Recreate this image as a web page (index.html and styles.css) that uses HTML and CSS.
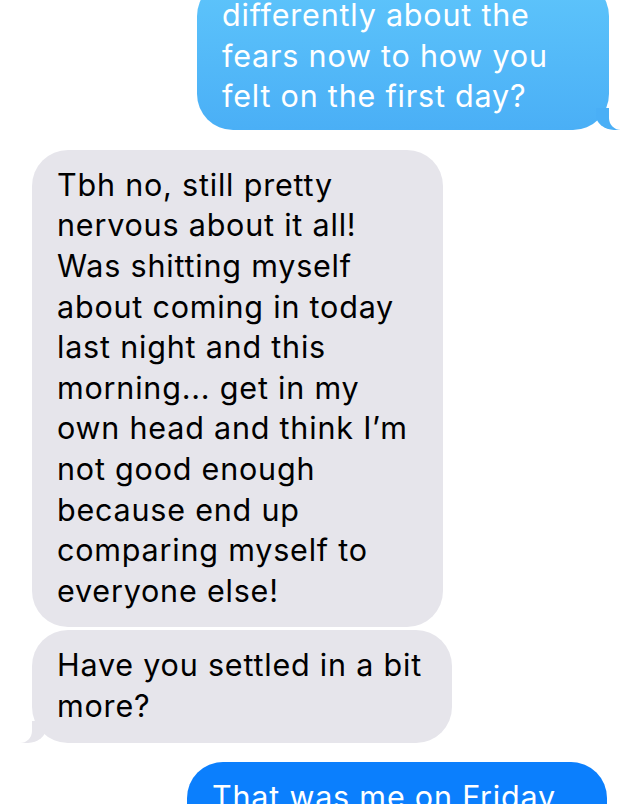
FILE: index.html
```html
<!DOCTYPE html>
<html lang="en">
<head>
    <meta charset="UTF-8">
    <meta name="viewport" content="width=device-width, initial-scale=1.0">
    <title>Messages</title>
    <link rel="stylesheet" href="styles.css">
</head>
<body>

    <!-- Conversacion -->
    <div class="thread">
        <div class="bubble sent light top-msg">
            differently about the<br>
            fears now to how you<br>
            felt on the first day?
        </div>

        <div class="bubble received first-msg">
            Tbh no, still pretty<br>
            nervous about it all!<br>
            Was shitting myself<br>
            about coming in today<br>
            last night and this<br>
            morning... get in my<br>
            own head and think I’m<br>
            not good enough<br>
            because end up<br>
            comparing myself to<br>
            everyone else!
        </div>

        <div class="bubble received tail second-msg">
            Have you settled in a bit<br>
            more?
        </div>

        <div class="bubble sent dark last-msg">
            That was me on Friday
        </div>
    </div>

</body>
</html>
```

FILE: styles.css
```css
body {
    font-family: "Inter", "Noto Sans", sans-serif;
    background-color: #ffffff;
    margin: 0;
    padding: 0;
    overflow: hidden;
}

.thread {
    display: flex;
    flex-direction: column;
    margin-top: -20px;
}

.bubble {
    position: relative;
    box-sizing: border-box;
    font-size: 30.5px;
    letter-spacing: 0.8px;
    line-height: 40.6px;
    padding: 15px 20px 16px 25px;
    border-radius: 36px;
    white-space: nowrap;
}

.sent {
    align-self: flex-end;
    margin-right: 31px;
    color: #ffffff;
}

.light {
    background: linear-gradient(180deg, #5ec5fb 0%, #4aaff6 100%);
}

.dark {
    background-color: #0b7ffd;
}

.received {
    align-self: flex-start;
    margin-left: 32px;
    background-color: #e6e5eb;
    color: #000000;
}

.top-msg {
    width: 412px;
    padding-bottom: 13px;
}

.first-msg {
    width: 411px;
    margin-top: 20px;
}

.second-msg {
    width: 420px;
    margin-top: 3px;
}

.last-msg {
    width: 420px;
    margin-top: 19px;
    margin-right: 33px;
    padding-bottom: 40px;
}

/* Colitas de las burbujas */
.light::before {
    content: "";
    position: absolute;
    bottom: 0;
    right: -11px;
    width: 24px;
    height: 22px;
    background-color: #4aaff6;
    border-bottom-left-radius: 18px 15px;
}

.light::after {
    content: "";
    position: absolute;
    bottom: 0;
    right: -14px;
    width: 14px;
    height: 24px;
    background-color: #ffffff;
    border-bottom-left-radius: 12px;
}

.tail::before {
    content: "";
    position: absolute;
    bottom: 0;
    left: -12px;
    width: 26px;
    height: 22px;
    background-color: #e6e5eb;
    border-bottom-right-radius: 18px 15px;
}

.tail::after {
    content: "";
    position: absolute;
    bottom: 0;
    left: -15px;
    width: 15px;
    height: 24px;
    background-color: #ffffff;
    border-bottom-right-radius: 12px;
}
```
